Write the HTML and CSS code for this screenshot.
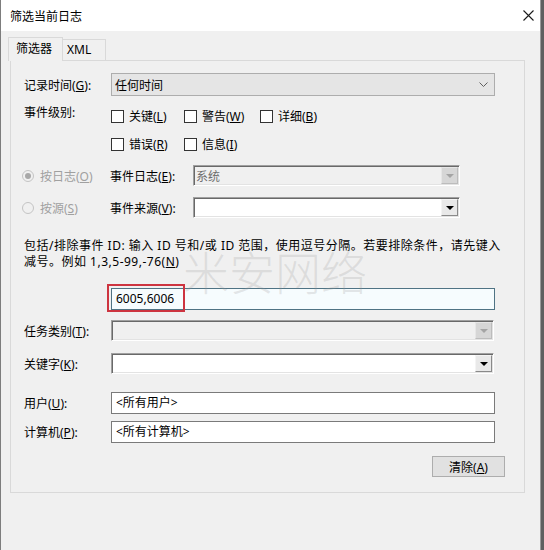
FILE: index.html
```html
<!DOCTYPE html>
<html lang="zh-CN">
<head>
  <meta charset="UTF-8">
  <title>筛选当前日志</title>
  <link rel="stylesheet" href="styles.css">
</head>
<body>
  <div class="window">
    <div class="titlebar">
      <span class="title">筛选当前日志</span>
      <span class="close">
        <svg width="11" height="11" viewBox="0 0 11 11"><path d="M0.5 0.5 L10.5 10.5 M10.5 0.5 L0.5 10.5" stroke="#1a1a1a" stroke-width="1.1" fill="none"/></svg>
      </span>
    </div>

    <div class="tabs">
      <span class="tab active">筛选器</span>
      <span class="tab">XML</span>
    </div>

    <div class="panel">
      <div class="row">
        <span class="label">记录时间(<u>G</u>):</span>
        <div class="select">
          <span>任何时间</span>
          <svg class="chevron" width="9" height="5" viewBox="0 0 9 5"><polyline points="0.5,0.5 4.5,4.5 8.5,0.5" stroke="#606060" fill="none"/></svg>
        </div>
      </div>

      <div class="row levels">
        <span class="label level-label">事件级别:</span>
        <div class="checks">
          <label class="check"><span class="box"></span><span>关键(<u>L</u>)</span></label>
          <label class="check"><span class="box"></span><span>警告(<u>W</u>)</span></label>
          <label class="check"><span class="box"></span><span>详细(<u>B</u>)</span></label>
          <label class="check"><span class="box"></span><span>错误(<u>R</u>)</span></label>
          <label class="check"><span class="box"></span><span>信息(<u>I</u>)</span></label>
        </div>
      </div>

      <div class="row source row-log">
        <label class="radio checked"><span class="dot"></span><span>按日志(<u>O</u>)</span></label>
        <span class="sublabel">事件日志(<u>E</u>):</span>
        <div class="combo combo-short disabled"><span class="value">系统</span><span class="drop"></span></div>
      </div>

      <div class="row source row-src">
        <label class="radio"><span class="dot"></span><span>按源(<u>S</u>)</span></label>
        <span class="sublabel">事件来源(<u>V</u>):</span>
        <div class="combo combo-short"><span class="value"></span><span class="drop"></span></div>
      </div>

      <div class="desc">
        <div>包括/排除事件 ID: 输入 ID 号和/或 ID 范围，使用逗号分隔。若要排除条件，请先键入</div>
        <div>减号。例如 1,3,5-99,-76(<u>N</u>)</div>
      </div>

      <div class="row row-id">
        <span class="label"></span>
        <div class="input focused">6005,6006</div>
      </div>

      <div class="row row-task">
        <span class="label">任务类别(<u>T</u>):</span>
        <div class="combo combo-long disabled"><span class="value"></span><span class="drop"></span></div>
      </div>

      <div class="row row-key">
        <span class="label">关键字(<u>K</u>):</span>
        <div class="combo combo-long"><span class="value"></span><span class="drop"></span></div>
      </div>

      <div class="row row-user">
        <span class="label">用户(<u>U</u>):</span>
        <div class="input">&lt;所有用户&gt;</div>
      </div>

      <div class="row row-pc">
        <span class="label">计算机(<u>P</u>):</span>
        <div class="input">&lt;所有计算机&gt;</div>
      </div>

      <div class="actions">
        <button class="button">清除(<u>A</u>)</button>
      </div>

      <div class="watermark">米安网络</div>
      <div class="highlight"></div>
    </div>
  </div>
</body>
</html>
```

FILE: styles.css
```css
* {
  box-sizing: border-box;
}

body {
  margin: 0;
  width: 544px;
  height: 550px;
  overflow: hidden;
  background: #5f5f5f;
  font-family: "Noto Sans", "Noto Sans CJK SC", sans-serif;
  font-size: 12px;
  color: #000;
}

u {
  text-decoration: underline;
  text-underline-offset: 1px;
}

.window {
  width: 541px;
  height: 550px;
  background: #f0f0f0;
  border-left: 1px solid #7d7d7d;
  border-right: 1px solid #9a9a9a;
}

.titlebar {
  height: 31px;
  background: #fff;
  display: flex;
  align-items: center;
  justify-content: space-between;
  padding-left: 9px;
}

.title {
  font-size: 12px;
}

.close {
  width: 24px;
  display: flex;
  justify-content: center;
}

.tabs {
  display: flex;
  align-items: flex-end;
  height: 29px;
  padding-left: 7px;
}

.tab {
  height: 21px;
  width: 43px;
  padding-left: 4px;
  line-height: 19px;
  border: 1px solid #d9d9d9;
  border-left: none;
  border-bottom: none;
  background: #f0f0f0;
}

.tab.active {
  position: relative;
  z-index: 1;
  width: 55px;
  height: 24px;
  margin-bottom: -1px;
  padding-left: 7px;
  line-height: 22px;
  border-left: 1px solid #d9d9d9;
}

.panel {
  position: relative;
  margin-left: 9px;
  width: 515px;
  height: 433px;
  border: 1px solid #d9d9d9;
  padding: 12px 0 0 13px;
}

.row {
  display: flex;
  align-items: center;
}

.label {
  width: 87px;
  flex-shrink: 0;
}

.select {
  width: 384px;
  height: 23px;
  background: #e5e5e5;
  border: 1px solid #adadad;
  display: flex;
  align-items: center;
  justify-content: space-between;
  padding: 0 6px 0 3px;
}

.levels {
  margin-top: 12px;
  align-items: flex-start;
}

.level-label {
  line-height: 16px;
  margin-top: -3px;
}

.checks {
  display: grid;
  grid-template-columns: 73px 76px auto;
  row-gap: 12px;
}

.check {
  display: flex;
  align-items: center;
  gap: 5px;
  height: 16px;
}

.box {
  width: 13px;
  height: 13px;
  border: 1px solid #333;
  background: #fff;
}

.source {
  margin-left: -2px;
}

.row-log {
  margin-top: 13px;
}

.row-src {
  margin-top: 11px;
}

.radio {
  width: 88px;
  display: flex;
  align-items: center;
  gap: 6px;
  color: #a0a0a0;
}

.dot {
  width: 12px;
  height: 12px;
  border-radius: 50%;
  border: 1px solid #c4c4c4;
  background: #f0f0f0;
  display: flex;
  align-items: center;
  justify-content: center;
}

.radio.checked .dot::after {
  content: "";
  width: 6px;
  height: 6px;
  border-radius: 50%;
  background: #a8a8a8;
}

.sublabel {
  width: 83px;
}

.combo {
  height: 21px;
  background: #fff;
  border: 1px solid;
  border-color: #a0a0a0 #fff #fff #a0a0a0;
  box-shadow: inset 1px 1px #696969, inset -1px -1px #e3e3e3;
  display: flex;
  align-items: center;
  justify-content: space-between;
  padding: 1px 1px 1px 2px;
}

.combo.disabled {
  background: #f0f0f0;
}

.combo-short {
  width: 267px;
}

.combo-long {
  width: 383px;
}

.value {
  color: #6d6d6d;
}

.drop {
  width: 17px;
  height: 17px;
  background: #e9e9e9;
  border: 1px solid;
  border-color: #f4f4f4 #8a8a8a #8a8a8a #f4f4f4;
  display: flex;
  align-items: center;
  justify-content: center;
}

.drop::after {
  content: "";
  border-left: 4px solid transparent;
  border-right: 4px solid transparent;
  border-top: 4px solid #000;
}

.combo.disabled .drop {
  background: #d6d6d6;
  border-color: #e6e6e6 #bcbcbc #bcbcbc #e6e6e6;
}

.combo.disabled .drop::after {
  border-top-color: #a4a4a4;
}

.desc {
  margin-top: 20px;
  line-height: 16px;
  letter-spacing: 0.5px;
  white-space: nowrap;
}

.row-id {
  margin-top: 18px;
}

.input {
  width: 384px;
  height: 22px;
  background: #fff;
  border: 1px solid #7a7a7a;
  padding-left: 4px;
  line-height: 20px;
}

.input.focused {
  background: #f6fcfe;
  border-color: #4f7384;
}

.row-task {
  margin-top: 10px;
}

.row-key {
  margin-top: 12px;
}

.row-user {
  margin-top: 18px;
}

.row-pc {
  margin-top: 7px;
}

.actions {
  display: flex;
  justify-content: flex-end;
  margin-top: 13px;
  padding-right: 19px;
}

.button {
  width: 73px;
  height: 21px;
  background: #e1e1e1;
  border: 1px solid #adadad;
  font-family: inherit;
  font-size: 12px;
  padding: 0;
  color: #000;
}

.watermark {
  position: absolute;
  left: 172px;
  top: 193px;
  font-family: "Noto Sans CJK SC", sans-serif;
  font-size: 46px;
  font-weight: 300;
  line-height: 0.7;
  color: rgba(150, 150, 150, 0.22);
  pointer-events: none;
}

.highlight {
  position: absolute;
  left: 96px;
  top: 223px;
  width: 78px;
  height: 28px;
  border: 2px solid #cd3440;
}
```
